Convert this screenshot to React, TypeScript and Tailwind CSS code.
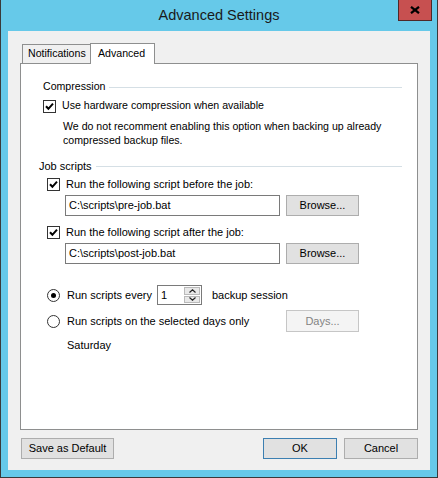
import type { ReactNode } from "react";

const ui = "font-['Liberation_Sans',Arial,sans-serif]";

function CheckBox() {
  return (
    <span className="flex h-[13px] w-[13px] shrink-0 items-center justify-center border border-[#333333] bg-white">
      <svg width="11" height="11" viewBox="0 0 11 11">
        <path d="M2 5.2 L4.4 7.8 L9 2.6" fill="none" stroke="#000" strokeWidth="2" />
      </svg>
    </span>
  );
}

function Radio({ on }: { on?: boolean }) {
  return (
    <span className="flex h-[13px] w-[13px] shrink-0 items-center justify-center rounded-full border border-[#333333] bg-white">
      {on && <span className="h-[5px] w-[5px] rounded-full bg-black" />}
    </span>
  );
}

function Button({
  children,
  className = "",
}: {
  children: ReactNode;
  className?: string;
}) {
  return (
    <button
      className={`flex h-[21px] shrink-0 items-center justify-center border text-[11px] ${className}`}
    >
      {children}
    </button>
  );
}

function GroupHeader({ label, className }: { label: string; className: string }) {
  return (
    <div className={`flex h-[16px] items-center ${className}`}>
      <span>{label}</span>
      <span className="ml-[4px] h-px flex-1 bg-[#d5dfe5]" />
    </div>
  );
}

function ScriptRow({ label, path }: { label: string; path: string }) {
  return (
    <>
      <div className="ml-[26px] flex h-[16px] items-center gap-[6px]">
        <CheckBox />
        <span>{label}</span>
      </div>
      <div className="ml-[44px] mt-[3px] flex h-[21px] items-center gap-[6px]">
        <div className="flex h-[21px] w-[215px] items-center border border-[#7a7a7a] bg-white pl-[3px]">
          {path}
        </div>
        <Button className="w-[73px] border-[#adadad] bg-[#e1e1e1]">Browse...</Button>
      </div>
    </>
  );
}

export default function App() {
  return (
    <div
      className={`${ui} flex h-[478px] w-[438px] flex-col border-x border-b border-[#3a3a3a] bg-[#66c9e9] text-black`}
    >
      {/* title bar */}
      <div className="grid h-[31px] shrink-0 grid-cols-[1fr_auto_1fr]">
        <div />
        <div className="self-center text-[14.5px] text-[#1a1a1a]">Advanced Settings</div>
        <div className="flex justify-end pr-[5px]">
          <div className="flex h-[21px] w-[34px] items-center justify-center border border-t-0 border-[#4f2828] bg-[#c75050]">
            <svg width="10" height="8" viewBox="0 0 10 8">
              <path d="M1 0.8 L9 7.2 M9 0.8 L1 7.2" stroke="#000" strokeWidth="2.2" />
            </svg>
          </div>
        </div>
      </div>

      {/* client area */}
      <div className="mx-[7px] flex h-[439px] flex-col bg-[#f0f0f0] px-[12px] pt-[12px]">
        {/* tabs */}
        <div className="ml-[2px] flex h-[20px] items-end">
          <div className="flex h-[19px] w-[69px] items-center border border-b-0 border-[#8e8f8f] bg-[#f0f0f0] pl-[5px] text-[10.6px]">
            Notifications
          </div>
          <div className="relative z-10 -mb-px -ml-px flex h-[21px] w-[65px] items-center border border-b-0 border-[#8e8f8f] bg-white pl-[7px] text-[10.6px]">
            Advanced
          </div>
        </div>

        {/* panel */}
        <div className="flex h-[367px] flex-col border border-[#8e8f8f] bg-white text-[11px]">
          <div className="text-[10.6px]">
            <GroupHeader label="Compression" className="ml-[22px] mr-[15px] mt-[15px]" />
            <div className="ml-[22px] mt-[3px] flex h-[16px] items-center gap-[6px]">
              <CheckBox />
              <span>Use hardware compression when available</span>
            </div>
            <div className="ml-[42px] mt-[5px] leading-[14px]">
              <div>We do not recomment enabling this option when backing up already</div>
              <div>compressed backup files.</div>
            </div>
          </div>

          <GroupHeader label="Job scripts" className="ml-[18px] mr-[15px] mt-[11px]" />
          <div className="mt-[2px]">
            <ScriptRow label="Run the following script before the job:" path="C:\scripts\pre-job.bat" />
          </div>
          <div className="mt-[8px]">
            <ScriptRow label="Run the following script after the job:" path="C:\scripts\post-job.bat" />
          </div>

          <div className="ml-[26px] mt-[21px] flex h-[20px] items-center">
            <Radio on />
            <span className="ml-[7px] w-[90px]">Run scripts every</span>
            <div className="flex h-[20px] w-[45px] border border-[#7a7a7a] bg-white">
              <div className="flex flex-1 items-center pl-[3px]">1</div>
              <div className="flex w-[17px] flex-col gap-px p-px pl-0">
                <div className="flex flex-1 items-center justify-center border border-[#b9b9b9] bg-[#e8e8e8]">
                  <svg width="7" height="4" viewBox="0 0 7 4">
                    <path d="M0.5 3.5 L3.5 0.8 L6.5 3.5" fill="none" stroke="#222" strokeWidth="1.2" />
                  </svg>
                </div>
                <div className="flex flex-1 items-center justify-center border border-[#b9b9b9] bg-[#e8e8e8]">
                  <svg width="7" height="4" viewBox="0 0 7 4">
                    <path d="M0.5 0.5 L3.5 3.2 L6.5 0.5" fill="none" stroke="#222" strokeWidth="1.2" />
                  </svg>
                </div>
              </div>
            </div>
            <span className="ml-[10px]">backup session</span>
          </div>

          <div className="ml-[26px] mt-[5px] flex h-[22px] items-center">
            <Radio />
            <span className="ml-[7px] w-[219px]">Run scripts on the selected days only</span>
            <Button className="h-[22px] w-[73px] border-[#c6c6c6] bg-[#f4f4f4] text-[#838383]">
              Days...
            </Button>
          </div>

          <div className="ml-[46px] mt-[5px] flex h-[16px] items-center">Saturday</div>
        </div>

        {/* footer buttons */}
        <div className="mt-[8px] flex items-center text-[11px]">
          <Button className="ml-px w-[93px] border-[#adadad] bg-[#e1e1e1]">Save as Default</Button>
          <div className="flex-1" />
          <Button className="w-[74px] border-[#3c7fb1] bg-[#e1e1e1]">OK</Button>
          <Button className="ml-[7px] w-[74px] border-[#adadad] bg-[#e1e1e1]">Cancel</Button>
        </div>
      </div>
    </div>
  );
}
